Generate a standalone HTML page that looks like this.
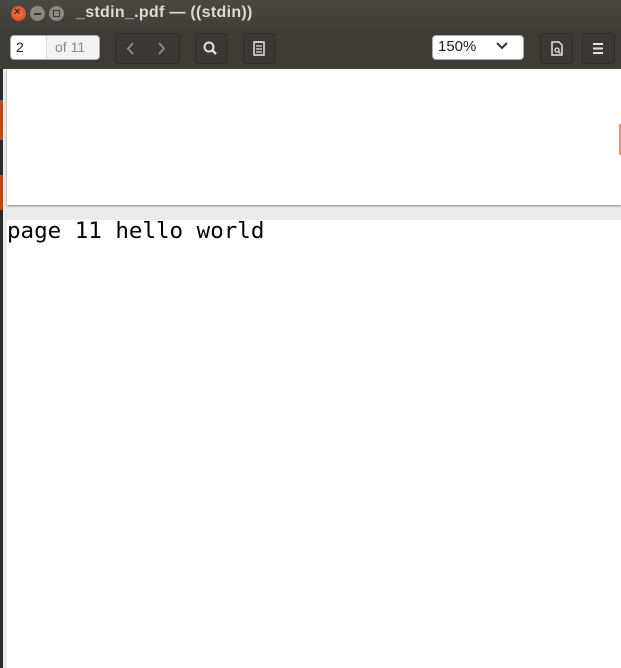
<!DOCTYPE html>
<html><head><style>
*{margin:0;padding:0;box-sizing:border-box}
body{width:621px;height:668px;overflow:hidden;background:#2b2a2c;font-family:"Liberation Sans",sans-serif;position:relative}
.title{position:absolute;left:0;top:0;width:621px;height:28px;background:linear-gradient(#4a4843,#3f3e3a);}
.tool{position:absolute;left:0;top:28px;width:621px;height:41px;background:#3d3c37;}
.btn{position:absolute;top:33px;height:31px;border:1px solid #2e2d2a;border-radius:4px;background:#3a3935;}
.wb{position:absolute;top:6px;width:15px;height:15px;border-radius:50%;}
.content{position:absolute;left:3px;top:69px;width:618px;height:599px;background:#ebebeb}
.p1{position:absolute;left:7px;top:69px;width:614px;height:136px;background:#fff;box-shadow:0 1px 2px #888}
.p2{position:absolute;left:7px;top:220px;width:614px;height:448px;background:#fff}
.txt{position:absolute;left:7px;top:219px;font-family:"DejaVu Sans Mono","Liberation Mono",monospace;font-size:22.5px;color:#000}
</style></head><body>
<div style="position:absolute;left:0;top:100px;width:3px;height:40px;background:#b34a20"></div>
<div style="position:absolute;left:0;top:175px;width:3px;height:35px;background:#b34a20"></div>
<div class="title">
 <div class="wb" style="left:11px;background:radial-gradient(#f27050,#d94a1f)"><span style="position:absolute;left:3px;top:0;font-size:11px;color:#4a1a0a;font-weight:bold">×</span></div>
 <div class="wb" style="left:30px;background:#8a8881"><span style="position:absolute;left:4px;top:7px;width:7px;height:1.5px;background:#3a3935"></span></div>
 <div class="wb" style="left:49px;background:#8a8881"><span style="position:absolute;left:4px;top:4px;width:7px;height:7px;border:1.5px solid #3a3935"></span></div>
 <div style="position:absolute;left:76px;top:4px;color:#dfdbd2;font-size:16px;font-weight:bold;letter-spacing:0.3px">_stdin_.pdf — ((stdin))</div>
</div>
<div class="tool"></div>
<div style="position:absolute;left:10px;top:35px;width:90px;height:25px;background:#fff;border-radius:4px;border:1px solid #aaa"></div>
<div style="position:absolute;left:46px;top:36px;width:1px;height:23px;background:#ddd"></div>
<div style="position:absolute;left:47px;top:36px;width:52px;height:23px;background:#f3f3f3;border-radius:0 3px 3px 0"></div>
<div style="position:absolute;left:16px;top:39px;font-size:14px;color:#222">2</div>
<div style="position:absolute;left:55px;top:39px;font-size:14px;color:#888">of 11</div>
<div class="btn" style="left:115px;width:65px"></div>
<svg style="position:absolute;left:115px;top:33px" width="65" height="31"><path d="M18 10 L13 15.5 L18 21 M44 10 L49 15.5 L44 21" stroke="#8d8b85" stroke-width="1.8" fill="none"/></svg>
<div class="btn" style="left:195px;width:32px"></div>
<svg style="position:absolute;left:195px;top:33px" width="32" height="31"><circle cx="14" cy="14" r="4.5" stroke="#e4e2dc" stroke-width="2" fill="none"/><path d="M17.5 17.5 L21 21" stroke="#e4e2dc" stroke-width="2.5"/></svg>
<div class="btn" style="left:243px;width:32px"></div>
<svg style="position:absolute;left:243px;top:33px" width="32" height="31"><rect x="11" y="9" width="10" height="13" stroke="#e4e2dc" stroke-width="1.5" fill="none"/><path d="M13 8v2M15.5 8v2M18 8v2M13 13h6M13 16h6M13 19h6" stroke="#e4e2dc" stroke-width="1.2"/></svg>
<div style="position:absolute;left:432px;top:35px;width:92px;height:25px;background:#fff;border-radius:4px;border:1px solid #aaa"></div>
<div style="position:absolute;left:438px;top:38px;font-size:15px;color:#222">150%</div>
<svg style="position:absolute;left:494px;top:40px" width="16" height="12"><path d="M3 3 L8 8 L13 3" stroke="#333" stroke-width="2" fill="none"/></svg>
<div class="btn" style="left:540px;width:33px"></div>
<svg style="position:absolute;left:540px;top:33px" width="33" height="31"><path d="M12 9h7l3 3v10h-10z" stroke="#e4e2dc" stroke-width="1.5" fill="none"/><circle cx="17" cy="17" r="2" stroke="#e4e2dc" stroke-width="1.3" fill="none"/><path d="M18.5 18.5l2 2" stroke="#e4e2dc" stroke-width="1.5"/></svg>
<div class="btn" style="left:582px;width:33px"></div>
<svg style="position:absolute;left:582px;top:33px" width="33" height="31"><path d="M11 11h10M11 15.5h10M11 20h10" stroke="#e4e2dc" stroke-width="2"/></svg>
<div class="content"></div>
<div class="p1"></div>
<div style="position:absolute;left:619px;top:124px;width:2px;height:31px;background:#f0956a"></div>
<div class="p2"></div>
<div class="txt" style="top:218px">page 11 hello world</div>
</body></html>
